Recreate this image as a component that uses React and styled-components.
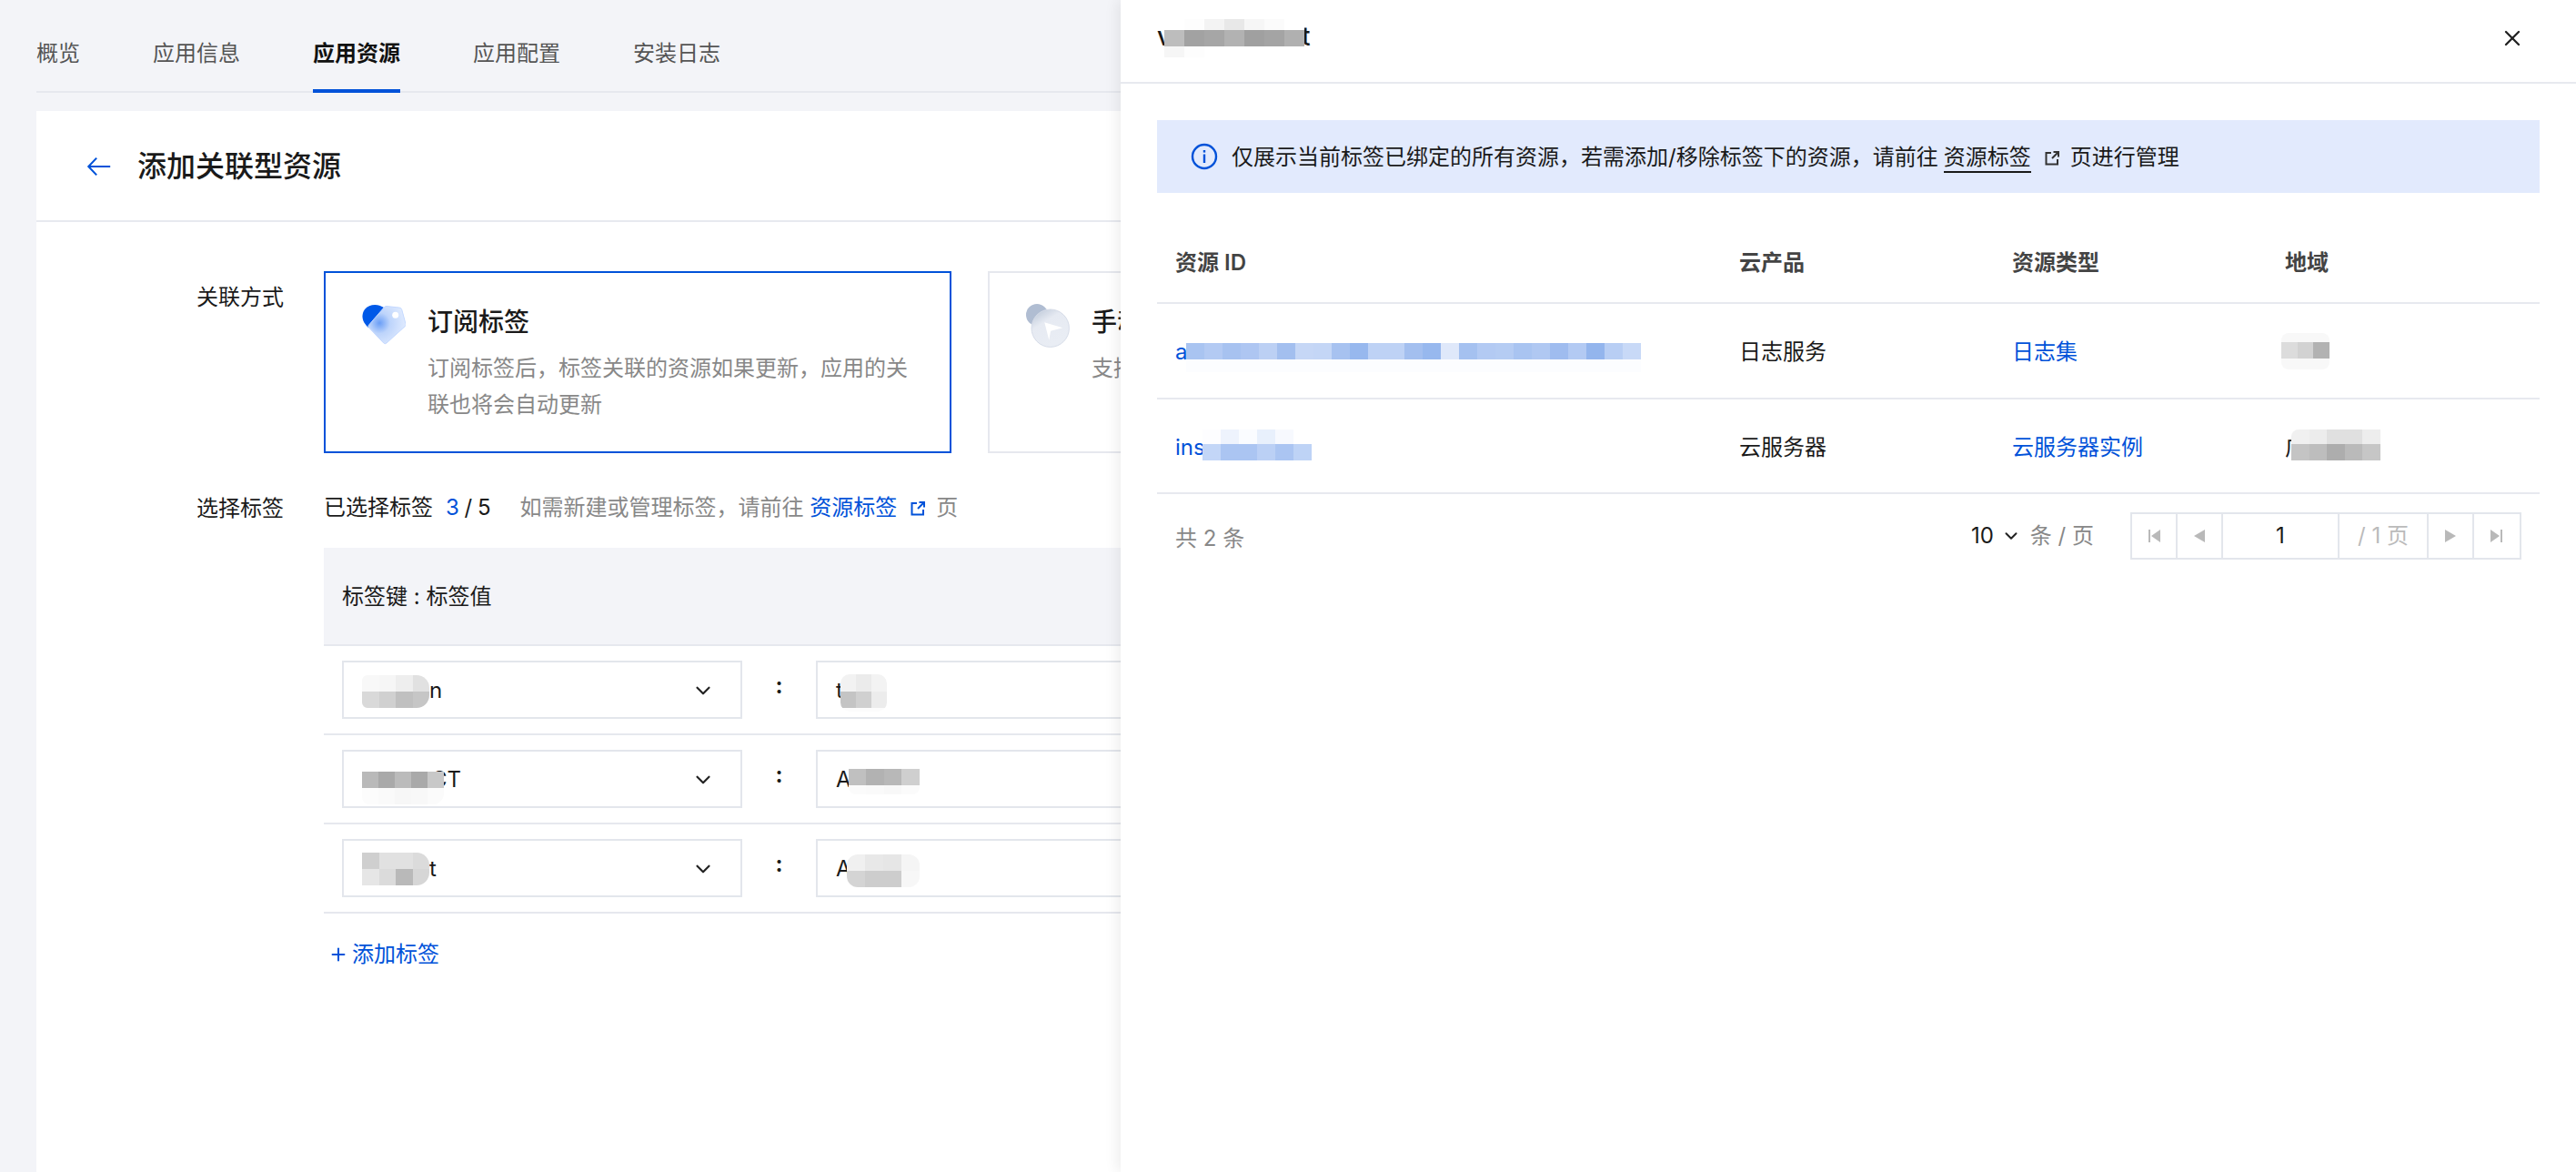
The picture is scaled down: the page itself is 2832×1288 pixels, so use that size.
import styled, { createGlobalStyle } from "styled-components";
import { ChevronDown, X, Plus } from "lucide-react";

const GlobalStyle = createGlobalStyle`
  html, body {
    margin: 0;
    padding: 0;
    background: #f3f4f8;
  }
  * {
    box-sizing: border-box;
  }
  body {
    font-family: Inter, "Noto Sans CJK SC", "Noto Sans", sans-serif;
    font-size: 24px;
    line-height: 36px;
    color: #1a1a1a;
  }
`;

//==========================================================================
//  Page

const Page = styled.div`
  position: relative;
  width: 2832px;
  height: 1288px;
  overflow: hidden;
  padding: 0 40px;
  background: #f3f4f8;
`;

const TabBar = styled.div`
  display: flex;
  gap: 80px;
  height: 102px;
  border-bottom: 2px solid #e6e8ee;
`;

const Tab = styled.div`
  height: 102px;
  padding-top: 41px;
  color: ${(p) => (p.$active ? "#111" : "#555")};
  font-weight: ${(p) => (p.$active ? 600 : 400)};
  border-bottom: 4px solid ${(p) => (p.$active ? "#0052d9" : "transparent")};
`;

const Card = styled.div`
  margin-top: 20px;
  height: 1166px;
  background: #fff;
`;

const CardHeader = styled.div`
  display: flex;
  align-items: center;
  gap: 27px;
  height: 122px;
  padding: 2px 0 0 54px;
  border-bottom: 2px solid #e7e9ef;
`;

const PageTitle = styled.h1`
  margin: 0;
  font-size: 32px;
  font-weight: 500;
  line-height: 44px;
  color: #1a1a1a;
`;

const Form = styled.div`
  display: flex;
  flex-direction: column;
  gap: 42px;
  padding-top: 54px;
`;

const FormRow = styled.div`
  display: flex;
`;

const Label = styled.div`
  flex: none;
  width: 272px;
  margin-right: 44px;
  padding-top: ${(p) => p.$top || 0}px;
  text-align: right;
`;

const FormBody = styled.div`
  flex: 1;
  min-width: 0;
`;

const Methods = styled.div`
  display: flex;
  gap: 40px;
`;

const Method = styled.div`
  display: flex;
  flex: none;
  gap: 24px;
  width: 690px;
  height: 200px;
  padding: 34px 0 0 40px;
  border: 2px solid ${(p) => (p.$active ? "#0052d9" : "#e6e8ee")};
`;

const MethodIcon = styled.svg`
  flex: none;
  width: 48px;
  height: 48px;
`;

const MethodTitle = styled.div`
  font-size: 28px;
  font-weight: 500;
  line-height: 40px;
  color: #1a1a1a;
`;

const MethodDesc = styled.div`
  width: 534px;
  margin-top: 11px;
  line-height: 40px;
  color: #888;
`;

const SelectedLine = styled.div`
  display: flex;
  align-items: center;
  height: 36px;
`;

const Count = styled.span`
  margin-left: 14px;
  word-spacing: -1px;
  color: #1a1a1a;
`;

const Blue = styled.span`
  color: #0052d9;
`;

const Hint = styled.span`
  margin-left: 32px;
  color: #888;
`;

const LinkIcon = styled.svg`
  flex: none;
  width: 18px;
  height: 18px;
  margin: 2px ${(p) => p.$after || 13}px 0 14px;
`;

const TagTable = styled.div`
  margin-top: 26px;
`;

const TagHead = styled.div`
  display: flex;
  align-items: center;
  height: 108px;
  padding: 2px 0 0 20px;
  background: #f3f4f8;
  border-bottom: 2px solid #e6e8ee;
`;

const TagRow = styled.div`
  display: flex;
  align-items: center;
  height: 98px;
  padding: 0 20px;
  border-bottom: 2px solid #e6e8ee;
`;

const SelectBox = styled.div`
  display: flex;
  flex: none;
  align-items: center;
  justify-content: space-between;
  width: 440px;
  height: 64px;
  padding: 0 28px 0 20px;
  border: 2px solid #e3e6ec;
`;

const Colon = styled.div`
  flex: none;
  width: 81px;
  margin-top: -8px;
  font-weight: 700;
  text-align: center;
`;

const InputBox = styled.div`
  display: flex;
  flex: none;
  align-items: center;
  width: 640px;
  height: 64px;
  padding: 0 20px;
  border: 2px solid #e3e6ec;
`;

const AddTag = styled.div`
  display: flex;
  align-items: center;
  gap: 4px;
  margin: 27px 0 0 5px;
  color: #0052d9;
`;

//==========================================================================
//  Pixelated parts of the screenshot

const Masked = styled.span`
  display: inline-flex;
  align-items: center;
  height: 36px;
  padding-top: ${(p) => p.$top || 0}px;
`;

const Mosaic = styled.span`
  display: inline-grid;
  flex: none;
  grid-template-columns: repeat(${(p) => p.$cols}, ${(p) => p.$cw}px);
  grid-template-rows: ${(p) => p.$rows};
  transform: translateY(${(p) => p.$dy || 0}px);
  margin-left: ${(p) => p.$ml || 0}px;
  margin-right: ${(p) => p.$mr || 0}px;
  border-radius: ${(p) => p.$radius || "0"};
  overflow: hidden;
`;

const Pixel = styled.span`
  background: ${(p) => p.$c};
`;

function Pixels({ colors, cols, cw, rows, dy, ml, mr, radius }) {
  return (
    <Mosaic $cols={cols} $cw={cw} $rows={rows} $dy={dy} $ml={ml} $mr={mr} $radius={radius}>
      {colors.map((c, i) => (
        <Pixel key={i} $c={c} />
      ))}
    </Mosaic>
  );
}

//==========================================================================
//  Drawer

const Drawer = styled.aside`
  position: absolute;
  top: 0;
  right: 0;
  bottom: 0;
  width: 1600px;
  background: #fff;
  box-shadow: -4px 0 14px rgba(0, 0, 0, 0.07);
`;

const DrawerHeader = styled.div`
  display: flex;
  align-items: center;
  justify-content: space-between;
  height: 92px;
  padding: 0 56px 6px 40px;
  border-bottom: 2px solid #e7e9ef;
`;

const DrawerTitle = styled.div`
  margin-top: -4px;
  font-size: 28px;
  font-weight: 500;
`;

const DrawerBody = styled.div`
  padding: 40px;
`;

const Alert = styled.div`
  display: flex;
  align-items: center;
  height: 80px;
  padding: 2px 0 0 36px;
  background: #e2eafd;
  color: #1a1a1a;
`;

const InfoIcon = styled.svg`
  flex: none;
  width: 32px;
  height: 32px;
  margin: -2px 14px 0 0;
`;

const Underlined = styled.span`
  margin-left: 6px;
  border-bottom: 2px solid #1a1a1a;
  line-height: 31px;
`;

const ResourceRow = styled.div`
  display: grid;
  grid-template-columns: 620px 300px 300px 1fr;
  align-items: center;
  height: ${(p) => (p.$head ? "92px" : "104.5px")};
  margin-top: ${(p) => (p.$head ? "30px" : 0)};
  border-bottom: 2px solid #e7e9ef;
  color: ${(p) => (p.$head ? "#444" : "#1a1a1a")};
  font-weight: ${(p) => (p.$head ? 600 : 400)};
`;

const ResourceCell = styled.div`
  display: flex;
  padding: 4px 0 0 20px;
  color: ${(p) => (p.$link ? "#0052d9" : "inherit")};
`;

const Footer = styled.div`
  display: flex;
  align-items: center;
  justify-content: space-between;
  padding: 20px 20px 0;
`;

const Muted = styled.span`
  color: #888;
`;

const PageSize = styled.div`
  display: flex;
  align-items: center;
`;

const SizeChevron = styled(ChevronDown)`
  margin-left: 8px;
`;

const SizeText = styled.span`
  margin-left: 10px;
  color: #888;
`;

const Pager = styled.div`
  display: flex;
  height: 52px;
  margin-left: 40px;
  border: 2px solid #e3e6ec;
`;

const PagerCell = styled.div`
  display: flex;
  align-items: center;
  justify-content: center;
  width: ${(p) => p.$w}px;
  color: ${(p) => p.$color || "#bbb"};
  border-right: ${(p) => (p.$last ? "none" : "2px solid #e3e6ec")};
`;

const PagerIcon = styled.svg`
  width: 16px;
  height: 16px;
  fill: #b9b9b9;
`;

const LeftFooter = styled.div`
  margin-top: 6px;
`;

const SelectChevron = styled(ChevronDown)`
  margin-top: 2px;
`;

function ExternalIcon({ color, after }) {
  return (
    <LinkIcon viewBox="0 0 18 18" fill="none" stroke={color} strokeWidth="2" $after={after}>
      <path d="M8 3H2.500v12.500H15V10" />
      <path d="M9 9l6.500-6.500M10.500 2h5.500v5.500" />
    </LinkIcon>
  );
}

function TagIcon() {
  return (
    <MethodIcon viewBox="0 0 48 48">
      <defs>
        <radialGradient id="tagFill" cx="0.3" cy="0.45" r="0.7">
          <stop offset="0" stopColor="#6a9ef6" />
          <stop offset="0.4" stopColor="#bdd4fb" />
          <stop offset="1" stopColor="#e0ebff" />
        </radialGradient>
      </defs>
      <path d="M7 26C1 21-2 13 3 6c5-6 15-7 22-1L14 22z" fill="#0059e8" />
      <path
        d="M27 2.500l14 1.600c1.500.2 2.400 1 2.800 2.400L48 22c.3 1 0 2-.8 2.700L27 43c-1 .9-2.400.9-3.300-.1L7.500 26c-.8-.8-.8-2 0-2.800L24.500 3.500c.7-.7 1.500-1.100 2.500-1z"
        fill="url(#tagFill)"
        stroke="#c3d8ff"
        strokeWidth="1"
      />
      <circle cx="36.700" cy="12.300" r="3.500" fill="#fff" />
    </MethodIcon>
  );
}

function ManualIcon() {
  return (
    <MethodIcon viewBox="0 0 48 48">
      <defs>
        <linearGradient id="discFill" x1="0.1" y1="0.1" x2="0.6" y2="0.9">
          <stop offset="0" stopColor="#c3cddc" />
          <stop offset="0.35" stopColor="#e6eaf2" />
          <stop offset="1" stopColor="#e9edf4" />
        </linearGradient>
      </defs>
      <circle cx="12" cy="12" r="12" fill="#b0bdd2" />
      <circle cx="26.700" cy="26.700" r="20.700" fill="url(#discFill)" stroke="#d6dce8" />
      <path d="M40.300 26.300L20.300 20.300l5 19.400 1.800-10z" fill="#fff" />
    </MethodIcon>
  );
}

function InfoGlyph() {
  return (
    <InfoIcon viewBox="0 0 32 32" fill="none">
      <circle cx="16" cy="16" r="13" stroke="#0052d9" strokeWidth="2.400" />
      <rect x="14.800" y="9" width="2.400" height="2.600" fill="#0052d9" />
      <rect x="14.800" y="13.500" width="2.400" height="9.500" fill="#0052d9" />
    </InfoIcon>
  );
}

//==========================================================================

const tabs = ["概览", "应用信息", "应用资源", "应用配置", "安装日志"];

const tagRows = [
  {
    keySuffix: "n",
    key: { cols: 4, cw: 18.500, rows: "18px 18px", radius: "6px 14px 14px 6px", dy: 1, colors: ["#f8f8f8", "#f6f6f6", "#eeeeee", "#e1e1e1", "#d9d9d9", "#d0d0d0", "#c0c0c0", "#c6c6c6"] },
    valPrefix: "t",
    val: { cols: 3, cw: 17, rows: "19px 18px 4px", radius: "10px", dy: 2, ml: -3, colors: ["#f2f2f2", "#ebebeb", "#f3f3f3", "#c4c4c4", "#d0d0d0", "#ececec", "#fcfcfc", "#fcfcfc", "#fcfcfc"] },
  },
  {
    keySuffix: "CT",
    key: { cols: 5, cw: 18, rows: "18px 18px", radius: "0 0 12px 8px", dy: 9, mr: -14, colors: ["#b9b9b9", "#a9a9a9", "#bbbbbb", "#a9a9a9", "#c8c8c8", "#fcfcfc", "#fafafa", "#f7f7f7", "#f8f8f8", "#fbfbfb"] },
    valPrefix: "A",
    val: { cols: 4, cw: 19.500, rows: "18px 10px", radius: "0 0 8px 8px", dy: 2, ml: -3, colors: ["#c0c0c0", "#b2b2b2", "#b8b8b8", "#cfcfcf", "#fbfbfb", "#fafafa", "#f8f8f8", "#fbfbfb"] },
  },
  {
    keySuffix: "t",
    key: { cols: 4, cw: 18.500, rows: "18px 18px", radius: "0 14px 14px 0", dy: 0, colors: ["#cfcfcf", "#e1e1e1", "#e1e1e1", "#dbdbdb", "#e6e6e6", "#dbdbdb", "#b9b9b9", "#d6d6d6"] },
    valPrefix: "A",
    val: { cols: 4, cw: 20, rows: "18px 18px", radius: "12px", dy: 2, ml: -5, colors: ["#f0f0f0", "#e8e8e8", "#e6e6e6", "#f5f5f5", "#d4d4d4", "#cdcdcd", "#cdcdcd", "#f7f7f7"] },
  },
];

const idTop = ["#a9c4f1", "#b3caf3", "#a7c2f0", "#aec6f2", "#bcd0f4", "#a3bfef", "#c6d7f6", "#c4d6f6", "#a7c2f0", "#97b8ee", "#bed2f5", "#bed2f5", "#a3bfef", "#97b8ee", "#dfe8fa", "#a5c1f0", "#b3caf3", "#b5ccf3", "#a9c4f1", "#b0c8f2", "#9fbcef", "#b3caf3", "#93b5ed", "#b8cef4", "#c8d9f7"];

export default function App() {
  return (
    <>
      <GlobalStyle />
      <Page>
        <TabBar>
          {tabs.map((t) => (
            <Tab key={t} $active={t === "应用资源"}>
              {t}
            </Tab>
          ))}
        </TabBar>

        <Card>
          <CardHeader>
            <svg width="30" height="30" viewBox="0 0 32 32" fill="none" stroke="#0052d9" strokeWidth="2.200">
              <path d="M29 16H4M13 6L3.500 16 13 26" />
            </svg>
            <PageTitle>添加关联型资源</PageTitle>
          </CardHeader>

          <Form>
            <FormRow>
              <Label $top={11}>关联方式</Label>
              <FormBody>
                <Methods>
                  <Method $active>
                    <TagIcon />
                    <div>
                      <MethodTitle>订阅标签</MethodTitle>
                      <MethodDesc>订阅标签后，标签关联的资源如果更新，应用的关联也将会自动更新</MethodDesc>
                    </div>
                  </Method>
                  <Method>
                    <ManualIcon />
                    <div>
                      <MethodTitle>手动选择</MethodTitle>
                      <MethodDesc>支持</MethodDesc>
                    </div>
                  </Method>
                </Methods>
              </FormBody>
            </FormRow>

            <FormRow>
              <Label $top={1}>选择标签</Label>
              <FormBody>
                <SelectedLine>
                  已选择标签
                  <Count>
                    <Blue>3</Blue> / 5
                  </Count>
                  <Hint>如需新建或管理标签，请前往</Hint>
                  <Blue>&nbsp;资源标签</Blue>
                  <ExternalIcon color="#0052d9" after={11} />
                  <Muted>页</Muted>
                </SelectedLine>

                <TagTable>
                  <TagHead>标签键 : 标签值</TagHead>
                  {tagRows.map((r, i) => (
                    <TagRow key={i}>
                      <SelectBox>
                        <Masked $top={2}>
                          <Pixels {...r.key} />
                          {r.keySuffix}
                        </Masked>
                        <SelectChevron size={26} strokeWidth={2} color="#222" />
                      </SelectBox>
                      <Colon>:</Colon>
                      <InputBox>
                        <Masked $top={2}>
                          {r.valPrefix}
                          <Pixels {...r.val} />
                        </Masked>
                      </InputBox>
                    </TagRow>
                  ))}
                </TagTable>

                <AddTag>
                  <Plus size={22} strokeWidth={2.200} />
                  添加标签
                </AddTag>
              </FormBody>
            </FormRow>
          </Form>
        </Card>

        <Drawer>
          <DrawerHeader>
            <DrawerTitle>
              <Masked>
                v
                <Pixels
                  cols={7}
                  cw={22}
                  rows="12px 18px 12px"
                  dy={2}
                  ml={-8}
                  mr={-3}
                  colors={[
                    "#fff", "#fdfdfd", "#f3f3f3", "#e8e8e8", "#f6f6f6", "#fbfbfb", "#fff",
                    "#bdbdbd", "#a2a2a2", "#a6a6a6", "#b2b2b2", "#a0a0a0", "#a4a4a4", "#b0b0b0",
                    "#f6f6f6", "#fdfdfd", "#fff", "#fff", "#fff", "#fff", "#fff",
                  ]}
                />
                t
              </Masked>
            </DrawerTitle>
            <X size={28} strokeWidth={2} color="#222" />
          </DrawerHeader>

          <DrawerBody>
            <Alert>
              <InfoGlyph />
              仅展示当前标签已绑定的所有资源，若需添加/移除标签下的资源，请前往
              <Underlined>资源标签</Underlined>
              <ExternalIcon color="#333" after={11} />
              页进行管理
            </Alert>

            <ResourceRow $head>
              <ResourceCell>资源 ID</ResourceCell>
              <ResourceCell>云产品</ResourceCell>
              <ResourceCell>资源类型</ResourceCell>
              <ResourceCell>地域</ResourceCell>
            </ResourceRow>

            <ResourceRow>
              <ResourceCell $link>
                <Masked>
                  a
                  <Pixels
                    cols={25}
                    cw={20}
                    rows="18px 14px"
                    dy={6}
                    ml={-1}
                    colors={[...idTop, ...idTop.map(() => "#fcfdff")]}
                  />
                </Masked>
              </ResourceCell>
              <ResourceCell>日志服务</ResourceCell>
              <ResourceCell $link>日志集</ResourceCell>
              <ResourceCell>
                <Pixels
                  cols={3}
                  cw={17.500}
                  rows="10px 18px 12px"
                  radius="8px"
                  ml={-4}
                  dy={-1}
                  colors={["#f8f8f8", "#f8f8f8", "#f8f8f8", "#dcdcdc", "#d2d2d2", "#b2b2b2", "#f8f8f8", "#f8f8f8", "#f8f8f8"]}
                />
              </ResourceCell>
            </ResourceRow>

            <ResourceRow>
              <ResourceCell $link>
                <Masked>
                  ins
                  <Pixels
                    cols={6}
                    cw={20}
                    rows="16px 18px"
                    dy={-3}
                    ml={-3}
                    colors={["#fdfdff", "#eef3fd", "#fafcff", "#e8f0fc", "#f7f9fe", "#fff", "#c3d6f7", "#abc5f2", "#abc5f2", "#bbd0f5", "#abc5f2", "#bed3f6"]}
                  />
                </Masked>
              </ResourceCell>
              <ResourceCell>云服务器</ResourceCell>
              <ResourceCell $link>云服务器实例</ResourceCell>
              <ResourceCell>
                <Masked>
                  广
                  <Pixels
                    cols={5}
                    cw={19.500}
                    rows="16px 18px"
                    dy={-3}
                    ml={-17}
                    radius="8px 0 0 0"
                    colors={["#f0f0f0", "#ececec", "#e0e0e0", "#e0e0e0", "#ededed", "#c4c4c4", "#bdbdbd", "#adadad", "#bababa", "#c6c6c6"]}
                  />
                </Masked>
              </ResourceCell>
            </ResourceRow>

            <Footer>
              <LeftFooter>
                <Muted>共 2 条</Muted>
              </LeftFooter>
              <PageSize>
                10
                <SizeChevron size={22} strokeWidth={2.200} color="#222" />
                <SizeText>条 / 页</SizeText>
                <Pager>
                  <PagerCell $w={50}>
                    <PagerIcon viewBox="0 0 16 16">
                      <path d="M2 1h2v14H2zM15 1v14L5 8z" />
                    </PagerIcon>
                  </PagerCell>
                  <PagerCell $w={50}>
                    <PagerIcon viewBox="0 0 16 16">
                      <path d="M14 1v14L2 8z" />
                    </PagerIcon>
                  </PagerCell>
                  <PagerCell $w={128} $color="#1a1a1a">1</PagerCell>
                  <PagerCell $w={98}>/ 1 页</PagerCell>
                  <PagerCell $w={50}>
                    <PagerIcon viewBox="0 0 16 16">
                      <path d="M2 1v14l12-7z" />
                    </PagerIcon>
                  </PagerCell>
                  <PagerCell $w={50} $last>
                    <PagerIcon viewBox="0 0 16 16">
                      <path d="M12 1h2v14h-2zM1 1v14l10-7z" />
                    </PagerIcon>
                  </PagerCell>
                </Pager>
              </PageSize>
            </Footer>
          </DrawerBody>
        </Drawer>
      </Page>
    </>
  );
}
